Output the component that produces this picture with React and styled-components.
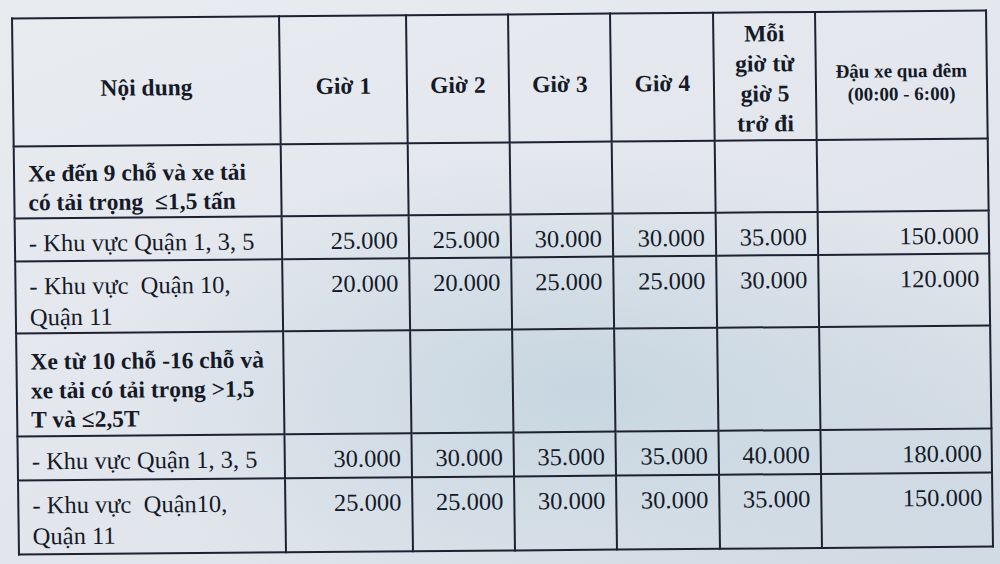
import styled, { createGlobalStyle } from "styled-components";

const GlobalStyle = createGlobalStyle`
  html, body {
    margin: 0;
    padding: 0;
  }
  body {
    width: 1000px;
    height: 564px;
    overflow: hidden;
    font-family: "Liberation Serif", "Times New Roman", serif;
  }
`;

const Page = styled.div`
  width: 1000px;
  height: 564px;
  box-sizing: border-box;
  padding: 13px 0 0 14px;
  background:
    radial-gradient(ellipse 480px 240px at 580px 390px, rgba(192, 210, 222, 0.8), rgba(192, 210, 222, 0) 100%),
    radial-gradient(ellipse 360px 260px at 960px 520px, rgba(200, 213, 225, 0.55), rgba(200, 213, 225, 0) 100%),
    linear-gradient(160deg, #e8ebf0 0%, #e2e6ec 60%, #d9e0e7 100%);
`;

// the sheet was photographed at a slight angle: tilt + skew
const Sheet = styled.table`
  width: 974px;
  border-collapse: collapse;
  table-layout: fixed;
  color: #151a29;
  transform-origin: 0 0;
  transform: matrix(1, -0.0082, 0.013, 1, -3, 4.5);
`;

const Row = styled.tr`
  height: ${(p) => p.h}px;
`;

const HeadCell = styled.th`
  border: 2px solid #1d2131;
  font-size: ${(p) => (p.small ? "19px" : "23.5px")};
  line-height: ${(p) => (p.small ? "23px" : "30px")};
  font-weight: bold;
  text-align: center;
  vertical-align: middle;
  padding: ${(p) => (p.small ? "14px 4px 0" : p.tall ? "4px 6px 0" : "12px 6px 0")};
`;

const Label = styled.td`
  border: 2px solid #1d2131;
  font-size: ${(p) => (p.bold ? "23.5px" : "24.5px")};
  font-weight: ${(p) => (p.bold ? "bold" : "normal")};
  line-height: ${(p) => (p.bold ? "29px" : "31px")};
  padding: ${(p) => (p.bold ? "12px 8px 0 13px" : "8px 8px 0 13px")};
  vertical-align: ${(p) => (p.bold ? "middle" : "top")};
  white-space: pre;
`;

const Num = styled.td`
  border: 2px solid #1d2131;
  font-size: 24.5px;
  line-height: 29px;
  text-align: right;
  vertical-align: top;
  padding: 9px ${(p) => (p.last ? "9px" : "10px")} 0 2px;
`;

const Empty = styled.td`
  border: 2px solid #1d2131;
`;

const widths = [267, 127, 102, 102, 103, 102, 171];

const sections = [
  {
    title: "Xe đến 9 chỗ và xe tải\ncó tải trọng  ≤1,5 tấn",
    h: 72,
    rows: [
      { label: "- Khu vực Quận 1, 3, 5", h: 43, v: ["25.000", "25.000", "30.000", "30.000", "35.000", "150.000"] },
      { label: "- Khu vực  Quận 10,\nQuận 11", h: 72, v: ["20.000", "20.000", "25.000", "25.000", "30.000", "120.000"] },
    ],
  },
  {
    title: "Xe từ 10 chỗ -16 chỗ và\nxe tải có tải trọng >1,5\nT và ≤2,5T",
    h: 103,
    rows: [
      { label: "- Khu vực Quận 1, 3, 5", h: 44, v: ["30.000", "30.000", "35.000", "35.000", "40.000", "180.000"] },
      { label: "- Khu vực  Quận10,\nQuận 11", h: 74, v: ["25.000", "25.000", "30.000", "30.000", "35.000", "150.000"] },
    ],
  },
];

function SectionRows({ section }) {
  return (
    <>
      <Row h={section.h}>
        <Label bold>{section.title}</Label>
        {[0, 1, 2, 3, 4, 5].map((i) => (
          <Empty key={i} />
        ))}
      </Row>
      {section.rows.map((r, ri) => (
        <Row key={ri} h={r.h}>
          <Label>{r.label}</Label>
          {r.v.map((v, vi) => (
            <Num key={vi} last={vi === 5}>
              {v}
            </Num>
          ))}
        </Row>
      ))}
    </>
  );
}

export default function App() {
  return (
    <>
      <GlobalStyle />
      <Page>
        <Sheet>
          <colgroup>
            {widths.map((w, i) => (
              <col key={i} style={{ width: w }} />
            ))}
          </colgroup>
          <tbody>
            <Row h={128}>
              <HeadCell>Nội dung</HeadCell>
              <HeadCell>Giờ 1</HeadCell>
              <HeadCell>Giờ 2</HeadCell>
              <HeadCell>Giờ 3</HeadCell>
              <HeadCell>Giờ 4</HeadCell>
              <HeadCell tall>
                Mỗi
                <br />
                giờ từ
                <br />
                giờ 5
                <br />
                trở đi
              </HeadCell>
              <HeadCell small>
                Đậu xe qua đêm
                <br />
                (00:00 - 6:00)
              </HeadCell>
            </Row>
            {sections.map((s, si) => (
              <SectionRows key={si} section={s} />
            ))}
          </tbody>
        </Sheet>
      </Page>
    </>
  );
}
